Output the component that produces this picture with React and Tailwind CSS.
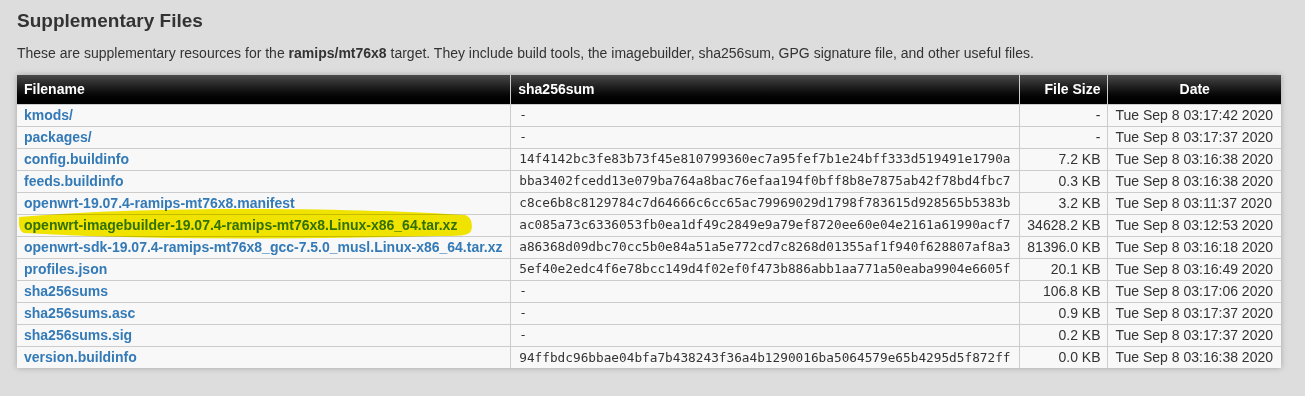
import React from "react";

const rows = [
  ["kmods/", "-", "-", "Tue Sep 8 03:17:42 2020"],
  ["packages/", "-", "-", "Tue Sep 8 03:17:37 2020"],
  ["config.buildinfo", "14f4142bc3fe83b73f45e810799360ec7a95fef7b1e24bff333d519491e1790a", "7.2 KB", "Tue Sep 8 03:16:38 2020"],
  ["feeds.buildinfo", "bba3402fcedd13e079ba764a8bac76efaa194f0bff8b8e7875ab42f78bd4fbc7", "0.3 KB", "Tue Sep 8 03:16:38 2020"],
  ["openwrt-19.07.4-ramips-mt76x8.manifest", "c8ce6b8c8129784c7d64666c6cc65ac79969029d1798f783615d928565b5383b", "3.2 KB", "Tue Sep 8 03:11:37 2020"],
  ["openwrt-imagebuilder-19.07.4-ramips-mt76x8.Linux-x86_64.tar.xz", "ac085a73c6336053fb0ea1df49c2849e9a79ef8720ee60e04e2161a61990acf7", "34628.2 KB", "Tue Sep 8 03:12:53 2020", true],
  ["openwrt-sdk-19.07.4-ramips-mt76x8_gcc-7.5.0_musl.Linux-x86_64.tar.xz", "a86368d09dbc70cc5b0e84a51a5e772cd7c8268d01355af1f940f628807af8a3", "81396.0 KB", "Tue Sep 8 03:16:18 2020"],
  ["profiles.json", "5ef40e2edc4f6e78bcc149d4f02ef0f473b886abb1aa771a50eaba9904e6605f", "20.1 KB", "Tue Sep 8 03:16:49 2020"],
  ["sha256sums", "-", "106.8 KB", "Tue Sep 8 03:17:06 2020"],
  ["sha256sums.asc", "-", "0.9 KB", "Tue Sep 8 03:17:37 2020"],
  ["sha256sums.sig", "-", "0.2 KB", "Tue Sep 8 03:17:37 2020"],
  ["version.buildinfo", "94ffbdc96bbae04bfa7b438243f36a4b1290016ba5064579e65b4295d5f872ff", "0.0 KB", "Tue Sep 8 03:16:38 2020"],
];

// marker stroke drawn over the highlighted filename
const Marker = () => (
  <svg
    className="absolute left-[-5px] top-[-6px] w-[454px] h-[30px] max-w-none pointer-events-none mix-blend-multiply"
    viewBox="0 0 454 30"
    preserveAspectRatio="none"
  >
    <path
      d="M0 8 C70 2 150 0 230 0 C320 0 400 3 446 6 C453 8 454 17 452 22 C449 27 440 27 420 27 C330 29 240 30 150 29 C90 28 40 26 5 24 C0 23 -1 12 0 8 Z"
      fill="#f7ea00"
    />
  </svg>
);

export default function App() {
  return (
    <div className="min-h-[396px] bg-[#dddddd] px-[17px] pt-[9px] text-[14px] text-[#333] font-['Liberation_Sans',Arial,sans-serif]">
      <h2 className="text-[19px] font-bold leading-[24px] text-[#333]">Supplementary Files</h2>
      <p className="mt-[10px] leading-[20px]">
        These are supplementary resources for the <b>ramips/mt76x8</b> target. They include build tools, the
        imagebuilder, sha256sum, GPG signature file, and other useful files.
      </p>
      <table className="mt-[12px] w-[1264px] border-collapse bg-[#f8f8f8] shadow-[0_0_6px_rgba(0,0,0,0.25)]">
        <thead>
          <tr className="h-[29px] bg-gradient-to-b from-[#4a4a4a] to-[#000] text-white font-bold text-left">
            <th className="w-[494px] px-[7px] border-r border-[#ccc]">Filename</th>
            <th className="w-[508px] px-[7px] border-r border-[#ccc]">sha256sum</th>
            <th className="w-[89px] px-[7px] border-r border-[#ccc] text-right">File Size</th>
            <th className="w-[173px] px-[7px] text-center">Date</th>
          </tr>
        </thead>
        <tbody>
          {rows.map(([name, sum, size, date, marked]) => (
            <tr key={name} className="h-[22px] border-t border-[#cccccc]">
              <td className="px-[7px] py-0 border-r border-[#cccccc]">
                <span className="relative inline-block font-bold text-[#337ab7] leading-[20px]">
                  {name}
                  {marked && <Marker />}
                </span>
              </td>
              <td className="px-[8px] border-r border-[#cccccc] font-['DejaVu_Sans_Mono',monospace] text-[12.75px] text-[#333]">
                {sum}
              </td>
              <td className="px-[7px] border-r border-[#cccccc] text-right">{size}</td>
              <td className="px-[7px] whitespace-nowrap">{date}</td>
            </tr>
          ))}
        </tbody>
      </table>
    </div>
  );
}
